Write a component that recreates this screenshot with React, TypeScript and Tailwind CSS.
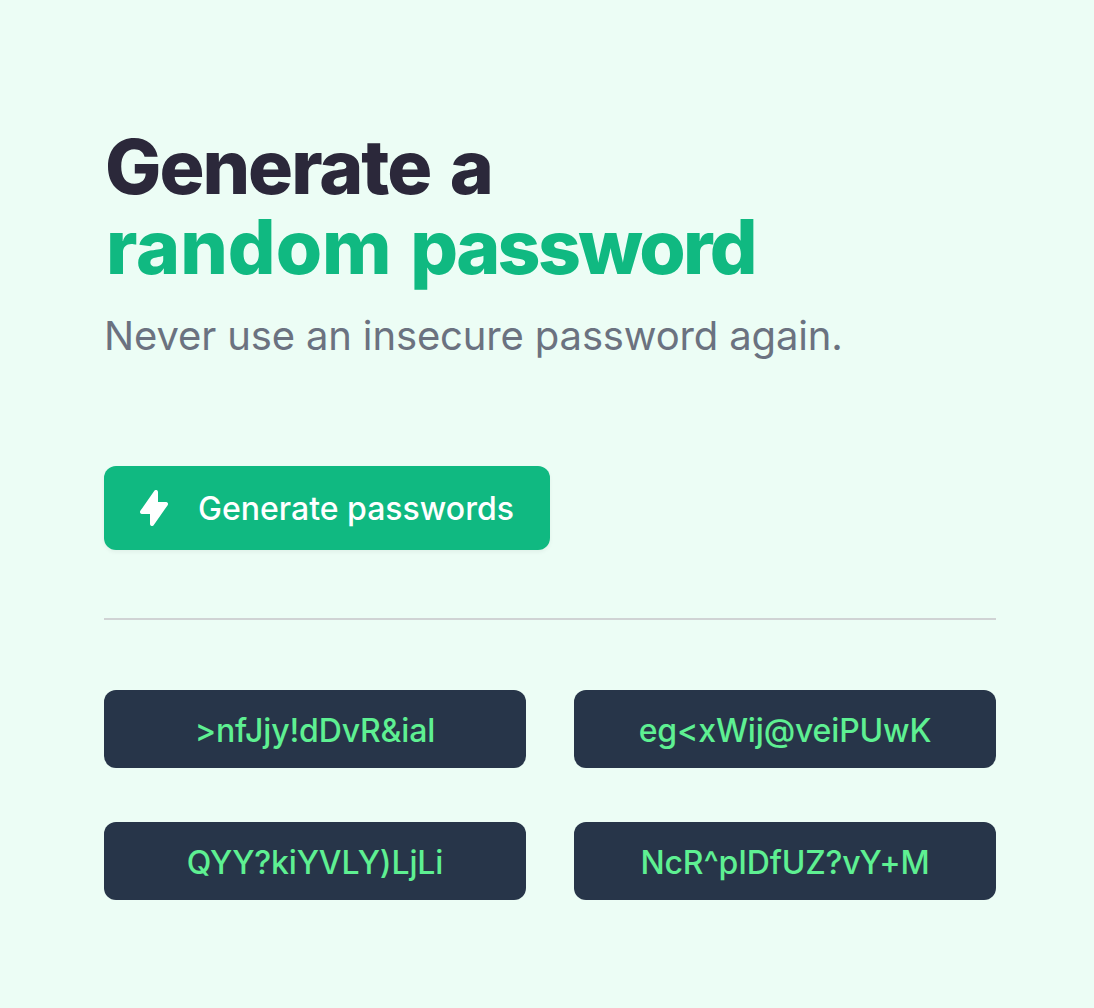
const passwords = [">nfJjy!dDvR&ial", "eg<xWij@veiPUwK", "QYY?kiYVLY)LjLi", "NcR^pIDfUZ?vY+M"];

export default function App() {
  return (
    <main className="min-h-screen bg-[#ecfdf5] pt-[127px] pl-26 pr-[98px] font-['Inter',sans-serif]">
      <h1 className="text-[75px] leading-[80px] font-extrabold text-[#2b283a]">
        <span className="block pl-px tracking-[-2px] [word-spacing:5px] whitespace-nowrap">Generate a</span>
        <span className="block pl-0.5 whitespace-nowrap text-[#10b981]">
          <span className="tracking-[0px]">random</span>
          <span className="tracking-[-2.7px] [word-spacing:5px]"> password</span>
        </span>
      </h1>
      <p className="mt-[25px] text-[40px] leading-[48px] tracking-[-0.14px] whitespace-nowrap text-[#6b7280]">Never use an insecure password again.</p>
      <button className="mt-[106px] flex h-[84px] w-[446px] items-center rounded-xl bg-[#10b981] pl-9 text-[32px] font-medium text-white shadow-[0_2px_4px_rgba(0,0,0,0.05)]">
        <svg className="mr-[30px] h-9 w-7" viewBox="0 0 28 36" fill="currentColor">
          <path d="M18 2.1V12h8a2 2 0 0 1 1.64 3.15l-14 20A2 2 0 0 1 10 34V24H2a2 2 0 0 1-1.64-3.15l14-20A2 2 0 0 1 18 2.1Z" />
        </svg>
        <span className="pt-0.5 whitespace-nowrap">Generate passwords</span>
      </button>
      <hr className="mt-[68px] border-t-2 border-[#d0d3d4]" />
      <div className="mt-[70px] grid grid-cols-2 gap-x-12 gap-y-[54px]">
        {passwords.map((p) => (
          <div key={p} className="flex h-[78px] items-center justify-center rounded-xl bg-[#273549] pt-1 text-[32px] font-medium tracking-[-0.15px] text-[#5ef092]">
            {p}
          </div>
        ))}
      </div>
    </main>
  );
}
